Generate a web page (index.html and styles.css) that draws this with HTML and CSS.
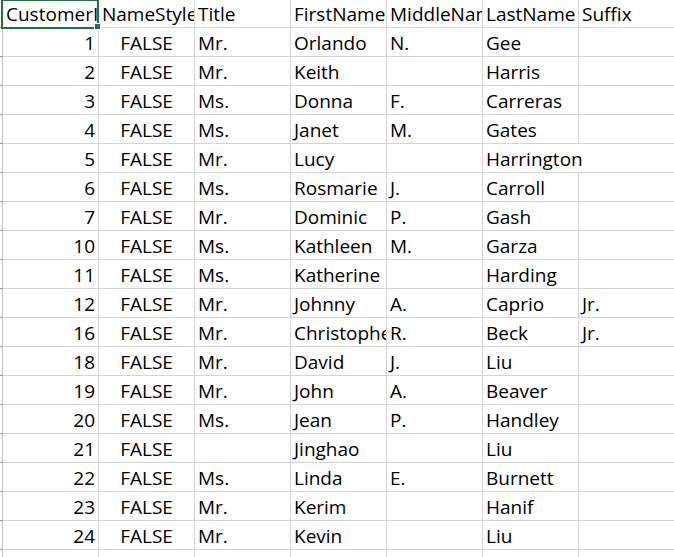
FILE: index.html
```html
<!DOCTYPE html>
<html>
<head>
<meta charset="utf-8">
<link rel="stylesheet" href="styles.css">
</head>
<body>
<div class="sheet">
  <div class="grid">
    <div class="rh"></div><div class="c">CustomerID</div><div class="c">NameStyle</div><div class="c">Title</div><div class="c">FirstName</div><div class="c">MiddleName</div><div class="c">LastName</div><div class="c">Suffix</div>
    <div class="rh"></div><div class="c n">1</div><div class="c b">FALSE</div><div class="c">Mr.</div><div class="c">Orlando</div><div class="c">N.</div><div class="c">Gee</div><div class="c"></div>
    <div class="rh"></div><div class="c n">2</div><div class="c b">FALSE</div><div class="c">Mr.</div><div class="c">Keith</div><div class="c"></div><div class="c">Harris</div><div class="c"></div>
    <div class="rh"></div><div class="c n">3</div><div class="c b">FALSE</div><div class="c">Ms.</div><div class="c">Donna</div><div class="c">F.</div><div class="c">Carreras</div><div class="c"></div>
    <div class="rh"></div><div class="c n">4</div><div class="c b">FALSE</div><div class="c">Ms.</div><div class="c">Janet</div><div class="c">M.</div><div class="c">Gates</div><div class="c"></div>
    <div class="rh"></div><div class="c n">5</div><div class="c b">FALSE</div><div class="c">Mr.</div><div class="c">Lucy</div><div class="c"></div><div class="c span2">Harrington</div>
    <div class="rh"></div><div class="c n">6</div><div class="c b">FALSE</div><div class="c">Ms.</div><div class="c">Rosmarie</div><div class="c">J.</div><div class="c">Carroll</div><div class="c"></div>
    <div class="rh"></div><div class="c n">7</div><div class="c b">FALSE</div><div class="c">Mr.</div><div class="c">Dominic</div><div class="c">P.</div><div class="c">Gash</div><div class="c"></div>
    <div class="rh"></div><div class="c n">10</div><div class="c b">FALSE</div><div class="c">Ms.</div><div class="c">Kathleen</div><div class="c">M.</div><div class="c">Garza</div><div class="c"></div>
    <div class="rh"></div><div class="c n">11</div><div class="c b">FALSE</div><div class="c">Ms.</div><div class="c">Katherine</div><div class="c"></div><div class="c">Harding</div><div class="c"></div>
    <div class="rh"></div><div class="c n">12</div><div class="c b">FALSE</div><div class="c">Mr.</div><div class="c">Johnny</div><div class="c">A.</div><div class="c">Caprio</div><div class="c">Jr.</div>
    <div class="rh"></div><div class="c n">16</div><div class="c b">FALSE</div><div class="c">Mr.</div><div class="c">Christopher</div><div class="c">R.</div><div class="c">Beck</div><div class="c">Jr.</div>
    <div class="rh"></div><div class="c n">18</div><div class="c b">FALSE</div><div class="c">Mr.</div><div class="c">David</div><div class="c">J.</div><div class="c">Liu</div><div class="c"></div>
    <div class="rh"></div><div class="c n">19</div><div class="c b">FALSE</div><div class="c">Mr.</div><div class="c">John</div><div class="c">A.</div><div class="c">Beaver</div><div class="c"></div>
    <div class="rh"></div><div class="c n">20</div><div class="c b">FALSE</div><div class="c">Ms.</div><div class="c">Jean</div><div class="c">P.</div><div class="c">Handley</div><div class="c"></div>
    <div class="rh"></div><div class="c n">21</div><div class="c b">FALSE</div><div class="c"></div><div class="c">Jinghao</div><div class="c"></div><div class="c">Liu</div><div class="c"></div>
    <div class="rh"></div><div class="c n">22</div><div class="c b">FALSE</div><div class="c">Ms.</div><div class="c">Linda</div><div class="c">E.</div><div class="c">Burnett</div><div class="c"></div>
    <div class="rh"></div><div class="c n">23</div><div class="c b">FALSE</div><div class="c">Mr.</div><div class="c">Kerim</div><div class="c"></div><div class="c">Hanif</div><div class="c"></div>
    <div class="rh"></div><div class="c n">24</div><div class="c b">FALSE</div><div class="c">Mr.</div><div class="c">Kevin</div><div class="c"></div><div class="c">Liu</div><div class="c"></div>
    <div class="rh"></div><div class="c n"></div><div class="c b"></div><div class="c"></div><div class="c"></div><div class="c"></div><div class="c"></div><div class="c"></div>
  </div>
  <div class="sel"></div>
  <div class="handle"></div>
</div>
</body>
</html>
```
FILE: styles.css
```css
html, body {
  margin: 0;
  padding: 0;
  background: #ffffff;
  overflow: hidden;
}
.sheet {
  position: relative;
  width: 674px;
  height: 557px;
  overflow: hidden;
}
.grid {
  display: grid;
  grid-template-columns: 3px repeat(7, 96px);
  grid-auto-rows: 29px;
  margin-top: -1px;
  font-family: "Open Sans", "Noto Sans", sans-serif;
  font-size: 19px;
  color: #000;
}
.rh {
  box-sizing: border-box;
  border-right: 1px solid #c3c3c3;
  border-bottom: 1px solid #9e9e9e;
  background: #ffffff;
}
.c {
  box-sizing: border-box;
  border-right: 1px solid #d4d4d4;
  border-bottom: 1px solid #d4d4d4;
  padding: 3px 3px 0 3px;
  line-height: 25px;
  white-space: nowrap;
  overflow: hidden;
}
.n {
  text-align: right;
  padding-right: 3px;
}
.b {
  text-align: center;
}
.span2 {
  grid-column: span 2;
}
.sel {
  position: absolute;
  left: 1px;
  top: -1px;
  width: 98px;
  height: 30px;
  box-sizing: border-box;
  border: 2px solid #217346;
}
.handle {
  position: absolute;
  left: 94px;
  top: 23px;
  width: 7px;
  height: 7px;
  box-sizing: border-box;
  background: #217346;
  border: 1px solid #ffffff;
}
```
